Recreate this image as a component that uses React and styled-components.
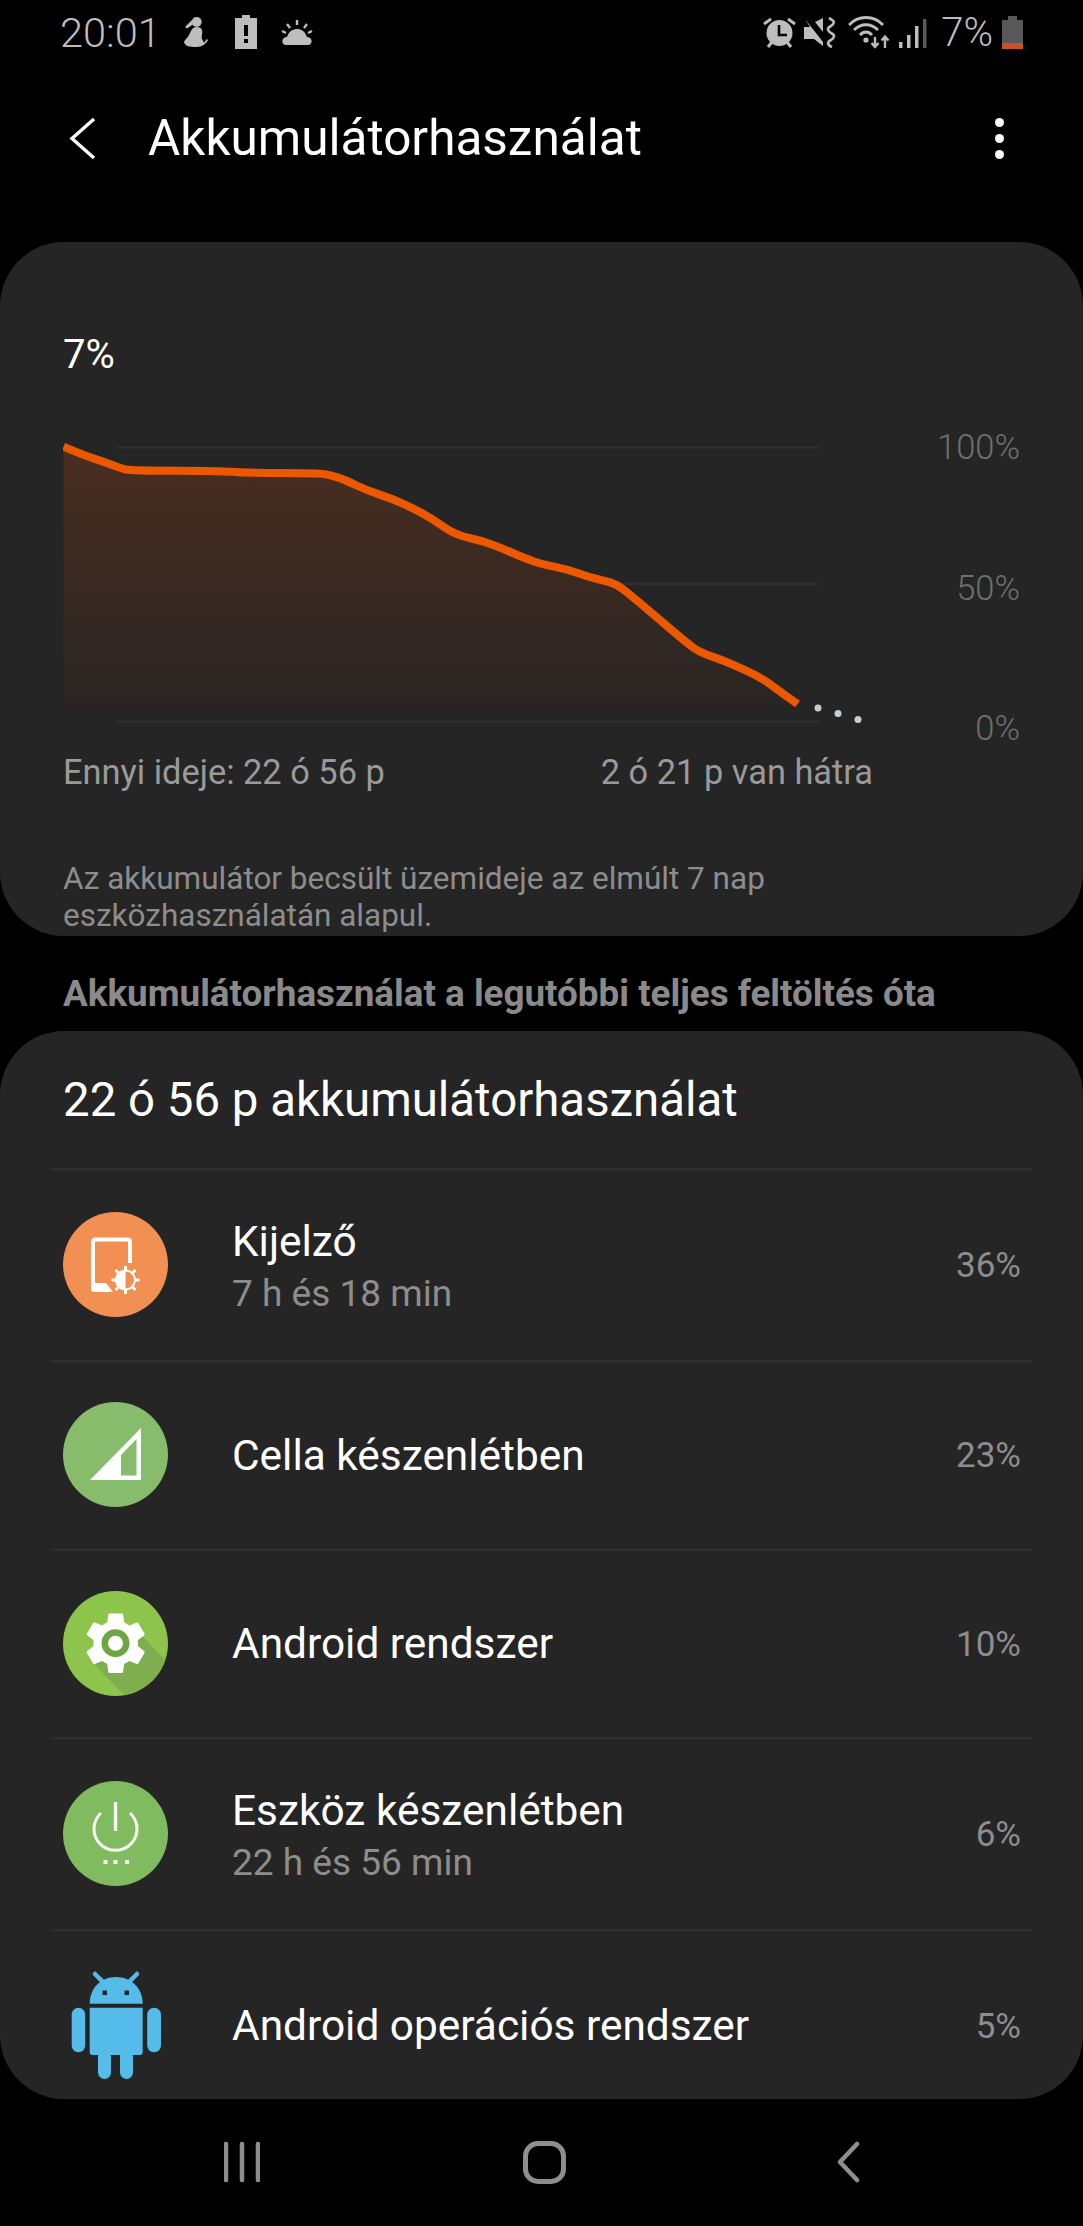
import React from "react";
import styled, { createGlobalStyle } from "styled-components";

const GlobalStyle = createGlobalStyle`
  html, body {
    margin: 0;
    padding: 0;
    background: #000;
  }
  body {
    font-family: Roboto, "Liberation Sans", sans-serif;
  }
`;

const GEAR =
  "M19.14,12.94c0.04-0.3,0.06-0.61,0.06-0.94c0-0.32-0.02-0.64-0.07-0.94l2.03-1.58c0.18-0.14,0.23-0.41,0.12-0.61l-1.92-3.32c-0.12-0.22-0.37-0.29-0.59-0.22l-2.39,0.96c-0.5-0.38-1.03-0.7-1.62-0.94L14.4,2.81c-0.04-0.24-0.24-0.41-0.48-0.41h-3.84c-0.24,0-0.43,0.17-0.47,0.41L9.25,5.35C8.66,5.59,8.12,5.92,7.63,6.29L5.24,5.33c-0.22-0.08-0.47,0-0.59,0.22L2.74,8.87C2.62,9.08,2.66,9.34,2.86,9.48l2.03,1.58C4.84,11.36,4.8,11.69,4.8,12s0.02,0.64,0.07,0.94l-2.03,1.58c-0.18,0.14-0.23,0.41-0.12,0.61l1.92,3.32c0.12,0.22,0.37,0.29,0.59,0.22l2.39-0.96c0.5,0.38,1.03,0.7,1.62,0.94l0.36,2.54c0.05,0.24,0.24,0.41,0.48,0.41h3.84c0.24,0,0.44-0.17,0.47-0.41l0.36-2.54c0.59-0.24,1.13-0.56,1.62-0.94l2.39,0.96c0.22,0.08,0.47,0,0.59-0.22l1.92-3.32c0.12-0.22,0.07-0.47-0.12-0.61L19.14,12.94z";

// page coordinates of the curve, read from the reference
const CURVE = [
  [63.5, 446.7], [83, 455], [103.6, 461.7], [121, 468.3], [131, 470.7], [221, 470.7],
  [241.7, 473], [317.7, 473], [331.5, 475.3], [345.3, 480], [366, 490], [393.6, 499.3],
  [414.4, 509], [431.6, 518.3], [449, 530.7], [462.7, 536.7], [480, 540.3], [500.7, 547.7],
  [524.9, 558.3], [542, 564.3], [566.3, 569], [587, 576.7], [611, 582.3], [621.5, 587.3],
  [656, 616.7], [690.6, 646], [701, 652.7], [725, 661], [759.7, 676.7], [777, 689.3],
  [797.6, 704],
];

function linePath(points) {
  let d = `M${points[0][0]} ${points[0][1]}`;
  for (let i = 1; i < points.length - 1; i++) {
    const mx = (points[i][0] + points[i + 1][0]) / 2;
    const my = (points[i][1] + points[i + 1][1]) / 2;
    d += ` Q${points[i][0]} ${points[i][1]} ${mx} ${my}`;
  }
  const last = points[points.length - 1];
  d += ` L${last[0]} ${last[1]}`;
  return d;
}

function Chart() {
  const d = linePath(CURVE);
  return (
    <ChartSvg viewBox="63 428 840 316">
      <defs>
        <linearGradient id="area" x1="0" y1="0" x2="0" y2="1">
          <stop offset="0" stopColor="#4a2e20" />
          <stop offset="1" stopColor="#292423" />
        </linearGradient>
      </defs>
      <g stroke="#2f2f2f" strokeWidth="2">
        <line x1="116" y1="447.5" x2="820" y2="447.5" />
        <line x1="116" y1="584" x2="820" y2="584" />
        <line x1="116" y1="721.5" x2="820" y2="721.5" />
      </g>
      <path d={`${d} L797 710 L63.5 710 Z`} fill="url(#area)" />
      <path d={d} fill="none" stroke="#ec5800" strokeWidth="8" />
      <g fill="#c5cdd2">
        <circle cx="818" cy="708" r="3.5" />
        <circle cx="838" cy="713.5" r="3.5" />
        <circle cx="858" cy="719.5" r="3.5" />
      </g>
    </ChartSvg>
  );
}

const StatusIcon = ({ w, h, children, ml }) => (
  <IconBox $ml={ml} width={w} height={h} viewBox={`0 0 ${w} ${h}`}>
    {children}
  </IconBox>
);

function StatusBar() {
  return (
    <StatusRow>
      <StatusGroup>
        <StatusTime>20:01</StatusTime>
        <StatusIcon w={26} h={32} ml={21}>
          <g fill="#bdbdbd">
            <circle cx="14.7" cy="6" r="5" />
            <path d="M10 4 L3 11 L5 12.5 L11 8.5 Z" />
            <path d="M11 12 C15 10 19 11 20 14 C21 18 19 20 20 23 C21 25 22 26 22 27 L24.5 23 L26 24 C24 28 20 31 15 31 C10 31 5 31 3 28 C1 26 3 24 5 22 C8 19 8 15 11 12 Z" />
          </g>
        </StatusIcon>
        <StatusIcon w={22} h={34} ml={27}>
          <path d="M7 0 H15 V3 H22 V34 H0 V3 H7 Z" fill="#bdbdbd" />
          <rect x="9" y="10" width="4" height="11" fill="#000" />
          <rect x="9" y="24" width="4" height="4" fill="#000" />
        </StatusIcon>
        <StatusIcon w={32} h={28} ml={24}>
          <path d="M5 27 C0 27 0 19 6 19 C8 13 12 11 16 11 C20 11 24 13 26 19 C32 19 32 27 27 27 Z" fill="#bdbdbd" />
          <g stroke="#bdbdbd" strokeWidth="2.4">
            <line x1="16" y1="2" x2="16" y2="7" />
            <line x1="6" y1="6" x2="9" y2="10" />
            <line x1="26" y1="6" x2="23" y2="10" />
            <line x1="1" y1="13" x2="5" y2="15" />
            <line x1="31" y1="13" x2="27" y2="15" />
          </g>
        </StatusIcon>
      </StatusGroup>
      <StatusGroup>
        <StatusIcon w={33} h={31}>
          <g stroke="#bdbdbd" strokeWidth="3">
            <line x1="1" y1="7" x2="8" y2="2" />
            <line x1="32" y1="7" x2="25" y2="2" />
            <line x1="5" y1="30" x2="9" y2="25" />
            <line x1="28" y1="30" x2="24" y2="25" />
          </g>
          <circle cx="16.5" cy="16" r="13" fill="#bdbdbd" />
          <path d="M16 8 V18 H24" fill="none" stroke="#000" strokeWidth="2.6" />
        </StatusIcon>
        <StatusIcon w={32} h={31} ml={8}>
          <path d="M1 2 L19 25 V29 L10 22 H0 V10 H6 Z M11 5 L19 1 V15 Z" fill="#bdbdbd" />
          <path d="M25 1 C31 4 31 6 27 9 C23 11 23 13 27 16 C31 18 31 20 27 23 C23 25 23 28 28 30" fill="none" stroke="#bdbdbd" strokeWidth="2.6" />
        </StatusIcon>
        <StatusIcon w={43} h={33} ml={12}>
          <g fill="none" stroke="#bdbdbd" strokeWidth="2.8">
            <path d="M1 9 C10 -1 26 -1 35 9" />
            <path d="M6 14 C13 7 23 7 30 14" />
            <path d="M12 19 C15.5 15 20.5 15 24 19" />
          </g>
          <circle cx="18" cy="24" r="2.6" fill="#bdbdbd" />
          <path d="M27 21 V30 M23.5 27 L27 31 L30.5 27 M37 32 V21 M33.5 24.5 L37 20.5 L40.5 24.5" fill="none" stroke="#bdbdbd" strokeWidth="2.4" />
        </StatusIcon>
        <StatusIcon w={28} h={31} ml={8}>
          <rect x="0" y="25" width="3.5" height="6" fill="#bdbdbd" />
          <rect x="8" y="18" width="3.5" height="13" fill="#bdbdbd" />
          <rect x="16" y="9" width="3.5" height="22" fill="#bdbdbd" />
          <rect x="24" y="2" width="3.5" height="29" fill="#585858" />
        </StatusIcon>
        <StatusPercent>7%</StatusPercent>
        <StatusIcon w={21} h={33} ml={9}>
          <path d="M6 0 H15 V4 H21 V33 H0 V4 H6 Z" fill="#585858" />
          <path d="M0 27 H21 V33 H0 Z" fill="#c8502a" />
        </StatusIcon>
      </StatusGroup>
    </StatusRow>
  );
}

function DisplayIcon() {
  return (
    <svg viewBox="0 0 105 105" width="105" height="105">
      <circle cx="52.5" cy="52.5" r="52.5" fill="#f28f52" />
      <path d="M67 51 V30 Q67 27.5 64.5 27.5 H32.5 Q30 27.5 30 30 V76" fill="none" stroke="#fff" strokeWidth="4" />
      <path d="M28 71 H43 L50 80 H31 Q28 80 28 77 Z" fill="#fff" />
      <g stroke="#fff" strokeWidth="3">
        <line x1="62.5" y1="54" x2="62.5" y2="82" />
        <line x1="48.5" y1="68" x2="76.5" y2="68" />
        <line x1="52.5" y1="58" x2="72.5" y2="78" />
        <line x1="72.5" y1="58" x2="52.5" y2="78" />
      </g>
      <circle cx="62.5" cy="68" r="9.5" fill="#f28f52" stroke="#fff" strokeWidth="2" />
      <path d="M62.5 58.5 A9.5 9.5 0 0 0 62.5 77.5 Z" fill="#fff" />
    </svg>
  );
}

function CellIcon() {
  return (
    <svg viewBox="0 0 105 105" width="105" height="105">
      <circle cx="52.5" cy="52.5" r="52.5" fill="#86bc6c" />
      <path d="M27 78 L78 26 V78 Z" fill="#fff" />
      <path d="M58 73.5 H73.5 V37 L58 53 Z" fill="#86bc6c" />
    </svg>
  );
}

function GearIcon() {
  return (
    <svg viewBox="0 0 105 105" width="105" height="105">
      <defs>
        <clipPath id="gearClip">
          <circle cx="52.5" cy="52.5" r="52.5" />
        </clipPath>
      </defs>
      <circle cx="52.5" cy="52.5" r="52.5" fill="#8cc44c" />
      <path d="M30 72 L62 105 H105 V72 L78 44 Z" fill="#7fae4f" clipPath="url(#gearClip)" />
      <g transform="translate(15.5 15) scale(3.1)">
        <path d={GEAR} fill="#fff" />
      </g>
      <circle cx="52.5" cy="52.2" r="14" fill="#6ea644" />
      <circle cx="52.5" cy="52.2" r="7.5" fill="#fff" />
    </svg>
  );
}

function PowerIcon() {
  return (
    <svg viewBox="0 0 105 105" width="105" height="105">
      <circle cx="52.5" cy="52.5" r="52.5" fill="#80bb60" />
      <path d="M38 32 A21.5 21.5 0 1 0 67 32" fill="none" stroke="#f5fbf0" strokeWidth="3" />
      <line x1="52.5" y1="21" x2="52.5" y2="50" stroke="#f5fbf0" strokeWidth="3.4" />
      <g fill="#f5fbf0">
        <rect x="40.5" y="79" width="4" height="4" />
        <rect x="50.5" y="79" width="4" height="4" />
        <rect x="62" y="79" width="4" height="4" />
      </g>
    </svg>
  );
}

function AndroidIcon() {
  return (
    <svg viewBox="0 0 105 110" width="105" height="110">
      <g fill="#55bbe8">
        <path d="M26.7 33.7 C26.7 18 38 7 53 7 C68 7 79.7 18 79.7 33.7 Z" />
        <path d="M26.7 37.7 H79.7 V82 Q79.7 85 76.7 85 H29.7 Q26.7 85 26.7 82 Z" />
        <rect x="8.7" y="37.7" width="13.5" height="44.5" rx="6.7" />
        <rect x="84.2" y="37.7" width="13.8" height="44.5" rx="6.7" />
        <rect x="35" y="80" width="13" height="29" rx="6.5" />
        <rect x="57" y="80" width="13" height="29" rx="6.5" />
      </g>
      <path d="M32 4 L39 11 M74 4 L67 11" stroke="#55bbe8" strokeWidth="4.5" strokeLinecap="round" />
      <rect x="39.5" y="20.5" width="4.5" height="4.5" fill="#1c2830" />
      <rect x="61.5" y="20.5" width="4.5" height="4.5" fill="#1c2830" />
    </svg>
  );
}

const ROWS = [
  { icon: <DisplayIcon />, name: "Kijelző", sub: "7 h és 18 min", value: "36%", height: 192 },
  { icon: <CellIcon />, name: "Cella készenlétben", value: "23%", height: 189 },
  { icon: <GearIcon />, name: "Android rendszer", value: "10%", height: 188 },
  { icon: <PowerIcon />, name: "Eszköz készenlétben", sub: "22 h és 56 min", value: "6%", height: 192 },
  { icon: <AndroidIcon />, name: "Android operációs rendszer", value: "5%", height: 192 },
];

export default function App() {
  return (
    <Page>
      <GlobalStyle />
      <StatusBar />
      <Header>
        <BackButton viewBox="0 0 27 43" width="27" height="43">
          <path d="M25 2 L3 21.5 L25 41" fill="none" stroke="#fff" strokeWidth="3.4" />
        </BackButton>
        <Title>Akkumulátorhasználat</Title>
        <MenuDots>
          <Dot />
          <Dot />
          <Dot />
        </MenuDots>
      </Header>

      <ChartCard>
        <LevelText>7%</LevelText>
        <ChartRow>
          <Chart />
          <AxisLabels>
            <AxisLabel>100%</AxisLabel>
            <AxisLabel>50%</AxisLabel>
            <AxisLabel>0%</AxisLabel>
          </AxisLabels>
        </ChartRow>
        <TimeRow>
          <span>Ennyi ideje: 22 ó 56 p</span>
          <span>2 ó 21 p van hátra</span>
        </TimeRow>
        <Note>
          Az akkumulátor becsült üzemideje az elmúlt 7 nap
          <br />
          eszközhasználatán alapul.
        </Note>
      </ChartCard>

      <SectionTitle>Akkumulátorhasználat a legutóbbi teljes feltöltés óta</SectionTitle>

      <ListCard>
        <ListHeading>22 ó 56 p akkumulátorhasználat</ListHeading>
        {ROWS.map((row) => (
          <UsageRow key={row.name} $height={row.height}>
            <RowIcon>{row.icon}</RowIcon>
            <RowText $hasSub={!!row.sub}>
              <RowName>{row.name}</RowName>
              {row.sub && <RowSub>{row.sub}</RowSub>}
            </RowText>
            <RowValue>{row.value}</RowValue>
          </UsageRow>
        ))}
      </ListCard>

      <NavBar>
        <NavSlot>
          <svg width="36" height="42" viewBox="0 0 36 42">
            <path d="M2 3 V39 M18 3 V39 M34 3 V39" stroke="#8e8e8e" strokeWidth="4.5" strokeLinecap="round" />
          </svg>
        </NavSlot>
        <NavSlot>
          <HomeButton />
        </NavSlot>
        <NavSlot>
          <svg width="24" height="42" viewBox="0 0 24 42">
            <path d="M21 3 L4 21 L21 39" fill="none" stroke="#8e8e8e" strokeWidth="4.5" strokeLinecap="round" strokeLinejoin="round" />
          </svg>
        </NavSlot>
      </NavBar>
    </Page>
  );
}

const Page = styled.div`
  width: 1083px;
  height: 2226px;
  background: #000;
  overflow: hidden;
`;

const StatusRow = styled.div`
  height: 62px;
  padding: 2px 60px 0;
  display: flex;
  justify-content: space-between;
  align-items: center;
  box-sizing: border-box;
`;

const StatusGroup = styled.div`
  display: flex;
  align-items: center;
`;

const StatusTime = styled.span`
  color: #bdbdbd;
  font-size: 41.5px;
  font-weight: 300;
`;

const StatusPercent = styled.span`
  color: #bdbdbd;
  font-size: 40px;
  font-weight: 300;
  margin-left: 14px;
`;

const IconBox = styled.svg`
  display: block;
  margin-left: ${(p) => p.$ml || 0}px;
`;

const Header = styled.div`
  height: 152px;
  margin-bottom: 28px;
  padding: 0 79px 0 69px;
  display: flex;
  align-items: center;
`;

const BackButton = styled.svg`
  display: block;
  margin-right: 52px;
`;

const Title = styled.div`
  flex: 1;
  color: #fff;
  font-size: 49.5px;
`;

const MenuDots = styled.div`
  display: flex;
  flex-direction: column;
  gap: 7px;
`;

const Dot = styled.div`
  width: 9px;
  height: 9px;
  border-radius: 50%;
  background: #fff;
`;

const ChartCard = styled.div`
  height: 694px;
  box-sizing: border-box;
  background: #252525;
  border-radius: 64px;
  padding: 90px 0 0 63px;
  overflow: hidden;
`;

const LevelText = styled.div`
  color: #fff;
  font-size: 40px;
  line-height: 46px;
`;

const ChartRow = styled.div`
  display: flex;
  margin-top: 50px;
`;

const ChartSvg = styled.svg`
  display: block;
  width: 840px;
  height: 316px;
  flex: none;
`;

const AxisLabels = styled.div`
  flex: 1;
  display: flex;
  flex-direction: column;
  justify-content: space-between;
  align-items: flex-end;
  padding-right: 63px;
  margin-bottom: -3px;
`;

const AxisLabel = styled.div`
  color: #6f6f6f;
  font-size: 34.5px;
  font-weight: 300;
  line-height: 38px;
`;

const TimeRow = styled.div`
  width: 810px;
  display: flex;
  justify-content: space-between;
  margin-top: 8px;
  color: #9a9a9a;
  font-size: 34.4px;
  line-height: 40px;
`;

const Note = styled.div`
  margin-top: 68px;
  color: #8d8d8d;
  font-size: 31.5px;
  line-height: 37px;
`;

const SectionTitle = styled.div`
  height: 95px;
  padding-left: 63px;
  color: #8a8a8a;
  font-size: 36.8px;
  font-weight: 700;
  line-height: 116px;
`;

const ListCard = styled.div`
  height: 1068px;
  background: #252525;
  border-radius: 64px;
  overflow: hidden;
`;

const ListHeading = styled.div`
  height: 137px;
  box-sizing: border-box;
  padding: 42px 63px 0;
  color: #fff;
  font-size: 47.4px;
  line-height: 54px;
`;

const UsageRow = styled.div`
  height: ${(p) => p.$height}px;
  box-sizing: border-box;
  margin: 0 51px;
  padding: 0 11px 0 12px;
  border-top: 2px solid #2e2e2e;
  display: flex;
  align-items: center;
`;

const RowIcon = styled.div`
  width: 105px;
  height: 105px;
  flex: none;
  margin-right: 64px;
  margin-bottom: 2px;
  display: flex;
  align-items: center;
  justify-content: center;
`;

const RowText = styled.div`
  flex: 1;
  padding-top: ${(p) => (p.$hasSub ? 6 : 0)}px;
`;

const RowName = styled.div`
  color: #fff;
  font-size: 42.4px;
  line-height: 52px;
`;

const RowSub = styled.div`
  color: #8d8d8d;
  font-size: 37px;
  line-height: 52px;
`;

const RowValue = styled.div`
  color: #8d8d8d;
  font-size: 35px;
`;

const NavBar = styled.div`
  height: 126px;
  padding-left: 90px;
  display: grid;
  grid-template-columns: repeat(3, 303px);
  align-items: center;
`;

const NavSlot = styled.div`
  display: flex;
  justify-content: center;
  align-items: center;
`;

const HomeButton = styled.div`
  width: 43px;
  height: 43px;
  box-sizing: border-box;
  border: 5px solid #8e8e8e;
  border-radius: 15px;
`;
